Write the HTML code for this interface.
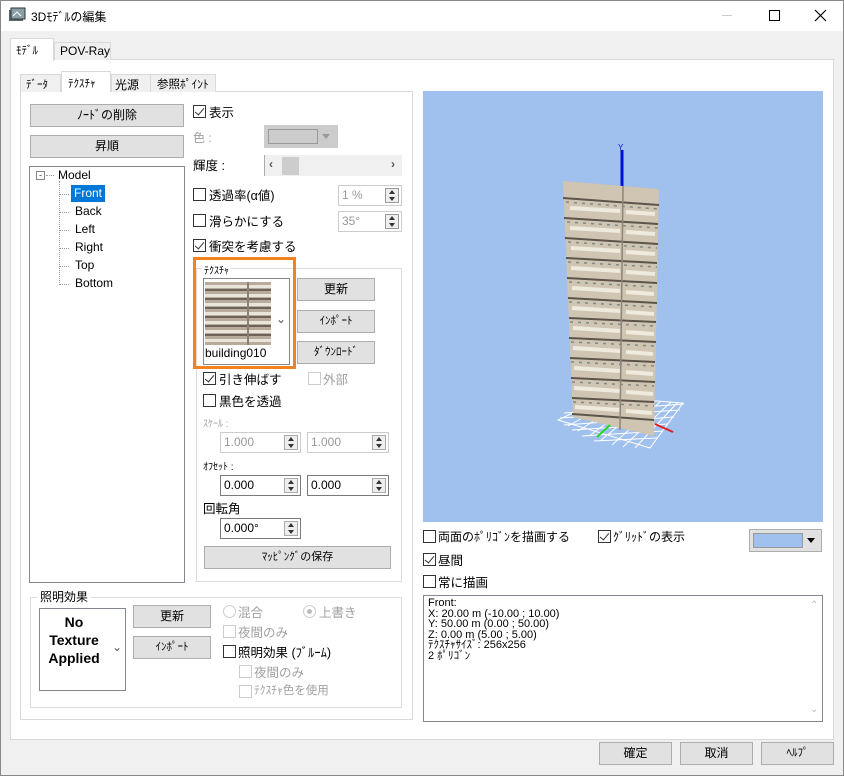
<!DOCTYPE html>
<html><head><meta charset="utf-8"><style>
*{box-sizing:border-box;margin:0;padding:0}
body{width:844px;height:776px;background:#f0f0f0;font-family:"Liberation Sans","Noto Sans CJK JP",sans-serif;font-size:12px;color:#000;position:relative;overflow:hidden}
.a{position:absolute;white-space:nowrap}
.btn{position:absolute;background:#e1e1e1;border:1px solid #adadad;text-align:center;line-height:20px;font-size:12px}
.cb{position:absolute;width:13px;height:13px;border:1px solid #333;background:#fff}
.cb.ck::after{content:"";position:absolute;left:3px;top:0px;width:4px;height:8px;border:solid #333;border-width:0 1.5px 1.5px 0;transform:rotate(40deg)}
.cb.dis{border-color:#ccc}
.gray{color:#a0a0a0}
.l{font-size:12.5px;margin-top:-2px}
.sp{position:absolute;background:#fff;border:1px solid #7a7a7a;height:21px;padding-left:3px;line-height:19px}
.sp.dis{border-color:#ccc;color:#999}
.sp .ar{position:absolute;right:2px;top:2px;width:14px;height:15px;border:1px solid #aaa;background:#eee}
.sp .ar::before{content:"";position:absolute;left:3px;top:1px;border:3px solid transparent;border-bottom:4px solid #333;border-top:none}
.sp .ar::after{content:"";position:absolute;left:3px;bottom:1px;border:3px solid transparent;border-top:4px solid #333;border-bottom:none}
.grp{position:absolute;border:1px solid #dcdcdc}
.gl{position:absolute;background:#fff;padding:0 3px}
</style></head><body>
<!-- title -->
<div class="a" style="left:0;top:0;width:844px;height:31px;background:#fff"></div>
<svg class="a" style="left:8px;top:7px" width="18" height="18"><rect x="1" y="3" width="14" height="11" fill="#5a6a70"/><rect x="3" y="1" width="14" height="11" fill="#8aa0a8" stroke="#333"/><path d="M5 9 l4-4 l4 4" stroke="#fff" fill="none"/></svg>
<div class="a" style="left:31px;top:8px;font-size:12px">3Dﾓﾃﾞﾙの編集</div>
<div class="a" style="left:722px;top:15px;width:10px;height:1px;background:#ccc"></div>
<div class="a" style="left:769px;top:10px;width:11px;height:11px;border:1px solid #000"></div>
<svg class="a" style="left:814px;top:9px" width="13" height="13"><path d="M1 1L12 12M12 1L1 12" stroke="#000" stroke-width="1.2"/></svg>
<!-- outer tabs -->
<div class="a" style="left:10px;top:59px;width:824px;height:681px;background:#fff;border:1px solid #d9d9d9"></div>
<div class="a" style="left:10px;top:38px;width:44px;height:23px;background:#fff;border:1px solid #d9d9d9;border-bottom:none;padding:3px 0 0 5px;font-size:11px">ﾓﾃﾞﾙ</div>
<div class="a" style="left:54px;top:42px;width:57px;height:18px;background:#f0f0f0;border:1px solid #d9d9d9;border-bottom:none;padding:1px 0 0 5px">POV-Ray</div>
<!-- inner tabs -->
<div class="a" style="left:20px;top:91px;width:393px;height:629px;border:1px solid #d9d9d9;background:#fff"></div>
<div class="a" style="left:20px;top:74px;width:41px;height:18px;background:#f0f0f0;border:1px solid #d9d9d9;border-bottom:none;padding:1px 0 0 5px;font-size:11px">ﾃﾞｰﾀ</div>
<div class="a" style="left:61px;top:71px;width:50px;height:21px;background:#fff;border:1px solid #d9d9d9;border-bottom:none;padding:3px 0 0 6px;font-size:11px">ﾃｸｽﾁｬ</div>
<div class="a" style="left:111px;top:74px;width:40px;height:18px;background:#f0f0f0;border:1px solid #d9d9d9;border-bottom:none;padding:1px 0 0 3px">光源</div>
<div class="a" style="left:150px;top:74px;width:66px;height:18px;background:#f0f0f0;border:1px solid #d9d9d9;border-bottom:none;padding:1px 0 0 6px;font-size:11.5px">参照ﾎﾟｲﾝﾄ</div>
<div class="btn" style="left:30px;top:104px;width:154px;height:23px">ﾉｰﾄﾞの削除</div>
<div class="btn" style="left:30px;top:135px;width:154px;height:23px">昇順</div>
<!-- tree -->
<div class="a" style="left:29px;top:166px;width:156px;height:417px;background:#fff;border:1px solid #828790"></div>
<div class="a" style="left:36px;top:171px;width:9px;height:9px;border:1px solid #888;font-size:9px;line-height:6px;text-align:center;color:#333">-</div>
<div class="a" style="left:46px;top:175px;width:8px;border-top:1px dotted #999"></div>
<div class="a" style="left:58px;top:168px">Model</div>
<div class="a" style="left:59px;top:181px;height:104px;border-left:1px dotted #999"></div>
<div class="a" style="left:71px;top:185px;width:34px;height:17px;background:#0078d7;color:#fff;padding:1px 0 0 3px">Front</div>
<div class="a" style="left:75px;top:204px">Back</div>
<div class="a" style="left:75px;top:222px">Left</div>
<div class="a" style="left:75px;top:240px">Right</div>
<div class="a" style="left:75px;top:258px">Top</div>
<div class="a" style="left:75px;top:276px">Bottom</div>
<div class="a" style="left:60px;top:194px;width:9px;border-top:1px dotted #999"></div>
<div class="a" style="left:60px;top:212px;width:9px;border-top:1px dotted #999"></div>
<div class="a" style="left:60px;top:230px;width:9px;border-top:1px dotted #999"></div>
<div class="a" style="left:60px;top:248px;width:9px;border-top:1px dotted #999"></div>
<div class="a" style="left:60px;top:266px;width:9px;border-top:1px dotted #999"></div>
<div class="a" style="left:60px;top:284px;width:9px;border-top:1px dotted #999"></div>
<!-- right column -->
<div class="cb ck" style="left:193px;top:105px"></div><div class="a l" style="left:209px;top:104px">表示</div>
<div class="a gray" style="left:193px;top:129px">色 :</div>
<div class="a" style="left:264px;top:125px;width:74px;height:23px;background:#ccc;border:1px solid #ccc"></div>
<div class="a" style="left:268px;top:129px;width:50px;height:15px;border:1px solid #999;background:#ccc"></div>
<div class="a" style="left:322px;top:134px;border:4px solid transparent;border-top:5px solid #999"></div>
<div class="a l" style="left:193px;top:157px">輝度 :</div>
<div class="a" style="left:264px;top:155px;width:138px;height:21px;background:#f0f0f0;border-left:1px solid #aaa"></div>
<div class="a" style="left:282px;top:157px;width:17px;height:18px;background:#cdcdcd"></div>
<div class="a" style="left:269px;top:157px;font-weight:bold;color:#555">&lsaquo;</div>
<div class="a" style="left:391px;top:157px;font-weight:bold;color:#555">&rsaquo;</div>
<div class="cb" style="left:193px;top:188px"></div><div class="a l" style="left:209px;top:187px">透過率(α値)</div>
<div class="sp dis" style="left:338px;top:185px;width:64px">1 %<div class="ar" style="border-color:#999"></div></div>
<div class="cb" style="left:193px;top:214px"></div><div class="a l" style="left:209px;top:213px">滑らかにする</div>
<div class="sp dis" style="left:338px;top:211px;width:64px">35°<div class="ar" style="border-color:#999"></div></div>
<div class="cb ck" style="left:193px;top:239px"></div><div class="a l" style="left:209px;top:238px">衝突を考慮する</div>
<!-- texture group -->
<div class="grp" style="left:196px;top:268px;width:206px;height:314px"></div>
<div class="a" style="left:193px;top:257px;width:103px;height:112px;border:3px solid #f58220"></div>
<div class="a" style="left:202px;top:262px;background:#fff;padding:0 2px;font-size:10px">ﾃｸｽﾁｬ</div>
<div class="a" style="left:203px;top:278px;width:87px;height:87px;border:1px solid #828790;background:#fff"></div>
<svg class="a" style="left:205px;top:282px" width="66" height="63"><rect width="66" height="63" fill="#b8ab9c"/><g fill="#e9e5da"><rect y="3" width="66" height="3"/><rect y="12" width="66" height="3"/><rect y="21" width="66" height="3"/><rect y="30" width="66" height="3"/><rect y="39" width="66" height="3"/><rect y="48" width="66" height="3"/><rect y="57" width="66" height="3"/></g><g fill="#6e6358"><rect y="7" width="66" height="2"/><rect y="16" width="66" height="2"/><rect y="25" width="66" height="2"/><rect y="34" width="66" height="2"/><rect y="43" width="66" height="2"/><rect y="52" width="66" height="2"/></g><rect x="42" width="2" height="63" fill="#8a7f72"/></svg>
<div class="a" style="left:276px;top:312px;color:#555">&#8964;</div>
<div class="a" style="left:205px;top:346px">building010</div>
<div class="btn" style="left:297px;top:278px;width:78px;height:23px">更新</div>
<div class="btn" style="left:297px;top:310px;width:78px;height:23px;font-size:11px">ｲﾝﾎﾟｰﾄ</div>
<div class="btn" style="left:297px;top:341px;width:78px;height:23px;font-size:11px">ﾀﾞｳﾝﾛｰﾄﾞ</div>
<div class="cb ck" style="left:203px;top:372px"></div><div class="a l" style="left:219px;top:371px">引き伸ばす</div>
<div class="cb dis" style="left:308px;top:372px"></div><div class="a gray l" style="left:323px;top:371px">外部</div>
<div class="cb" style="left:203px;top:394px"></div><div class="a l" style="left:219px;top:393px">黒色を透過</div>
<div class="a gray" style="left:203px;top:415px;font-size:10px">ｽｹｰﾙ :</div>
<div class="sp dis" style="left:220px;top:432px;width:81px">1.000<div class="ar"></div></div>
<div class="sp dis" style="left:307px;top:432px;width:82px">1.000<div class="ar"></div></div>
<div class="a" style="left:203px;top:458px;font-size:10px">ｵﾌｾｯﾄ :</div>
<div class="sp" style="left:220px;top:475px;width:81px">0.000<div class="ar"></div></div>
<div class="sp" style="left:307px;top:475px;width:82px">0.000<div class="ar"></div></div>
<div class="a l" style="left:203px;top:500px">回転角</div>
<div class="sp" style="left:220px;top:518px;width:81px">0.000°<div class="ar"></div></div>
<div class="btn" style="left:204px;top:546px;width:187px;height:23px;font-size:11px">ﾏｯﾋﾟﾝｸﾞの保存</div>
<!-- lighting -->
<div class="grp" style="left:30px;top:597px;width:372px;height:111px"></div>
<div class="gl" style="left:37px;top:588px;font-size:12px">照明効果</div>
<div class="a" style="left:39px;top:608px;width:87px;height:83px;border:1px solid #828790;background:#fff"></div>
<div class="a" style="left:44px;top:613px;width:60px;text-align:center;font-weight:bold;font-size:14px;line-height:18px;white-space:normal">No Texture Applied</div>
<div class="a" style="left:112px;top:640px;color:#555">&#8964;</div>
<div class="btn" style="left:133px;top:605px;width:78px;height:23px">更新</div>
<div class="btn" style="left:133px;top:636px;width:78px;height:23px;font-size:11px">ｲﾝﾎﾟｰﾄ</div>
<div class="a" style="left:223px;top:605px;width:13px;height:13px;border:1px solid #ccc;border-radius:50%"></div><div class="a gray l" style="left:238px;top:604px">混合</div>
<div class="a" style="left:303px;top:605px;width:13px;height:13px;border:1px solid #ccc;border-radius:50%"></div><div class="a" style="left:307px;top:609px;width:5px;height:5px;background:#bbb;border-radius:50%"></div><div class="a gray l" style="left:319px;top:604px">上書き</div>
<div class="cb dis" style="left:223px;top:625px"></div><div class="a gray l" style="left:238px;top:624px">夜間のみ</div>
<div class="cb" style="left:223px;top:645px"></div><div class="a l" style="left:238px;top:644px">照明効果 (ﾌﾞﾙｰﾑ)</div>
<div class="cb dis" style="left:239px;top:665px"></div><div class="a gray l" style="left:254px;top:664px">夜間のみ</div>
<div class="cb dis" style="left:239px;top:685px"></div><div class="a gray" style="left:254px;top:684px;font-size:11.5px;margin-top:-2px">ﾃｸｽﾁｬ色を使用</div>
<!-- 3D view -->
<svg class="a" style="left:423px;top:91px" width="400" height="431">
<rect width="400" height="431" fill="#a0c0ed"/>
<g transform="translate(-423,-91)">
<g stroke="#fff" stroke-width="1" fill="none">
<path d="M558 420 L606 397 L683 403 L650 448 Z"/>
<path d="M568 426L616 399M578 431L627 400M589 436L638 400M600 441L649 401M612 445L660 402M623 447L671 402M635 448L678 402"/>
<path d="M564 413L684 404M560 418L680 410M564 425L674 417M572 430L668 424M582 436L663 431M594 441L657 438"/>
</g>
<path d="M622 150 L622 187" stroke="#0012d9" stroke-width="3"/>
<text x="618" y="150" fill="#0012d9" font-size="8">Y</text>
<polygon points="563,181 659,189 654,436 573,417" fill="#cfc5b2"/>
<g stroke="#5d554b" stroke-width="2">
<path d="M563 198L659 205M564 218L658 224M565 238L658 244M566 258L657 263M567 278L657 283M568 298L657 303M569 318L656 322M569 338L656 342M570 358L655 362M571 378L655 382M572 398L654 402M572 414L654 420"/>
</g>
<g stroke="#eeeade" stroke-width="4">
<path d="M570 208L620 211M626 212L655 214M570 228L620 231M626 232L655 234M571 248L620 251M626 252L655 254M571 268L620 271M626 272L655 274M572 288L620 291M626 292L654 294M572 308L620 311M626 312L654 314M573 328L620 331M626 332L654 334M573 348L620 351M626 352L653 354M574 368L620 371M626 372L653 374M574 388L620 391M626 392L653 394M575 407L620 410M626 411L652 413"/>
</g>
<g stroke="#7d8a86" stroke-width="1.5" stroke-dasharray="3 5">
<path d="M566 202L658 209M567 222L658 228M568 242L657 248M568 262L657 267M569 282L656 287M569 302L656 307M570 322L656 326M571 342L655 346M571 362L655 366M572 382L654 386M573 402L654 406"/>
</g>
<path d="M623 186 L620 430" stroke="#8f8578" stroke-width="1.5"/>
<path d="M597 437 L610 425" stroke="#27d427" stroke-width="2"/>
<path d="M655 424 L673 432" stroke="#e02020" stroke-width="2"/>
</g></svg>
<div class="cb" style="left:423px;top:530px"></div><div class="a" style="left:438px;top:528px;font-size:12px">両面のﾎﾟﾘｺﾞﾝを描画する</div>
<div class="cb ck" style="left:598px;top:530px"></div><div class="a" style="left:613px;top:528px;font-size:12px">ｸﾞﾘｯﾄﾞの表示</div>
<div class="a" style="left:749px;top:529px;width:73px;height:23px;background:#e1e1e1;border:1px solid #adadad"></div>
<div class="a" style="left:753px;top:533px;width:50px;height:15px;background:#a0c0ed;border:1px solid #999"></div>
<div class="a" style="left:807px;top:538px;border:4px solid transparent;border-top:5px solid #000"></div>
<div class="cb ck" style="left:423px;top:553px"></div><div class="a l" style="left:438px;top:552px">昼間</div>
<div class="cb" style="left:423px;top:575px"></div><div class="a l" style="left:438px;top:574px">常に描画</div>
<div class="a" style="left:423px;top:595px;width:400px;height:127px;background:#fff;border:1px solid #828790;padding:2px 4px;font-size:11px;line-height:10.5px;white-space:pre">Front:
X: 20.00 m (-10.00 ; 10.00)
Y: 50.00 m (0.00 ; 50.00)
Z: 0.00 m (5.00 ; 5.00)
ﾃｸｽﾁｬｻｲｽﾞ: 256x256
2 ﾎﾟﾘｺﾞﾝ</div>
<div class="a" style="left:810px;top:600px;color:#bbb;font-size:10px">&#8963;</div>
<div class="a" style="left:810px;top:704px;color:#bbb;font-size:10px">&#8964;</div>
<!-- bottom buttons -->
<div class="btn" style="left:599px;top:742px;width:73px;height:23px">確定</div>
<div class="btn" style="left:680px;top:742px;width:73px;height:23px">取消</div>
<div class="btn" style="left:761px;top:742px;width:73px;height:23px;font-size:11px">ﾍﾙﾌﾟ</div>
<div class="a" style="left:0;top:0;width:844px;height:776px;border:1px solid #888;pointer-events:none"></div>
</body></html>
